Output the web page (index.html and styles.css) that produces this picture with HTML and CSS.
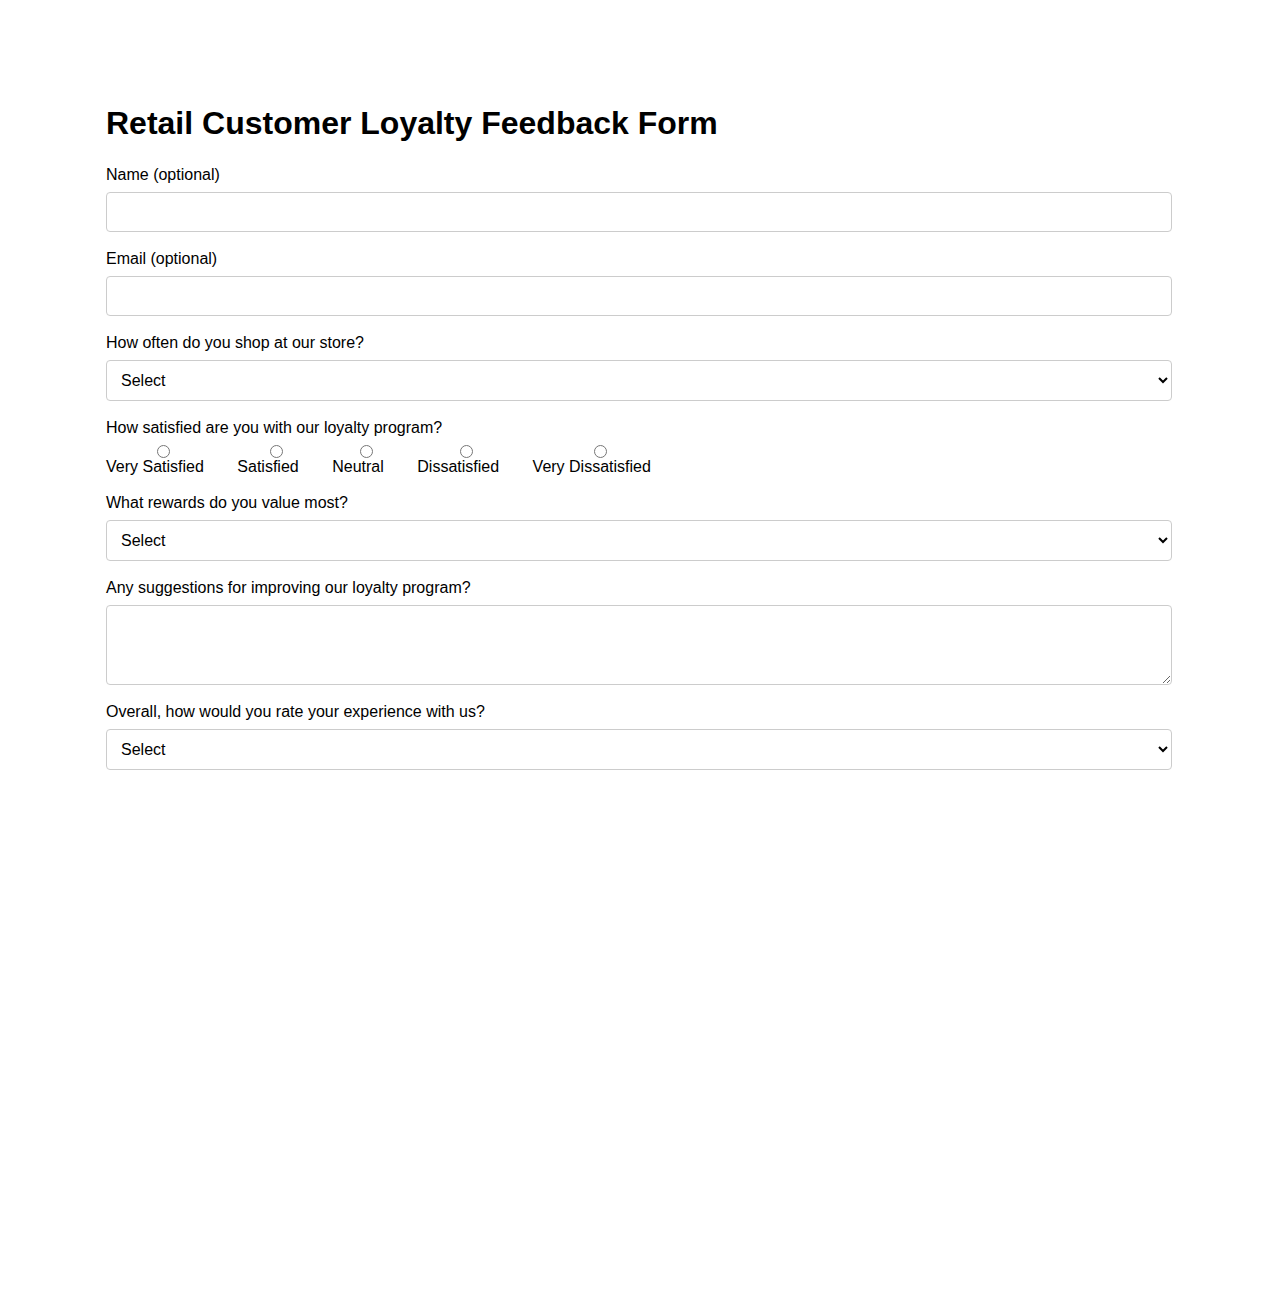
FILE: index.html
```html
<!DOCTYPE html>
<html lang="en">
<head>
<meta charset="utf-8">
<title>Retail Customer Loyalty Feedback Form</title>
<link rel="stylesheet" href="styles.css">
</head>
<body>
<div class="container">
  <h1 class="title">Retail Customer Loyalty Feedback Form</h1>
  <form class="form">
    <div class="field">
      <label class="label" for="name">Name (optional)</label>
      <input class="control" type="text" id="name">
    </div>
    <div class="field">
      <label class="label" for="email">Email (optional)</label>
      <input class="control" type="email" id="email">
    </div>
    <div class="field">
      <label class="label" for="freq">How often do you shop at our store?</label>
      <select class="control select" id="freq"><option>Select</option></select>
    </div>
    <div class="field">
      <span class="label">How satisfied are you with our loyalty program?</span>
      <div class="radios">
        <label class="radio"><input type="radio" name="sat"><span>Very Satisfied</span></label>
        <label class="radio"><input type="radio" name="sat"><span>Satisfied</span></label>
        <label class="radio"><input type="radio" name="sat"><span>Neutral</span></label>
        <label class="radio"><input type="radio" name="sat"><span>Dissatisfied</span></label>
        <label class="radio"><input type="radio" name="sat"><span>Very Dissatisfied</span></label>
      </div>
    </div>
    <div class="field">
      <label class="label" for="rewards">What rewards do you value most?</label>
      <select class="control select" id="rewards"><option>Select</option></select>
    </div>
    <div class="field">
      <label class="label" for="sugg">Any suggestions for improving our loyalty program?</label>
      <textarea class="control textarea" id="sugg"></textarea>
    </div>
    <div class="field">
      <label class="label" for="overall">Overall, how would you rate your experience with us?</label>
      <select class="control select" id="overall"><option>Select</option></select>
    </div>
  </form>
</div>
</body>
</html>
```
FILE: styles.css
```css
html, body {
  margin: 0;
  padding: 0;
  background: #fff;
}
body {
  font-family: "Liberation Sans", Arial, sans-serif;
  font-size: 16px;
  color: #000;
}
.container {
  width: 1066px;
  margin: 0 auto;
  padding-top: 105px;
}
.title {
  font-size: 32px;
  font-weight: bold;
  margin: 0 0 24px;
  line-height: 37px;
}
.form {
  display: flex;
  flex-direction: column;
  gap: 18px;
}
.field {
  display: flex;
  flex-direction: column;
}
.label {
  display: block;
  line-height: 18px;
  margin-bottom: 8px;
}
.control {
  box-sizing: border-box;
  width: 100%;
  border: 1px solid #ccc;
  border-radius: 4px;
  font-family: "Liberation Sans", Arial, sans-serif;
  font-size: 16px;
  padding: 10px;
  margin: 0;
  background: #fff;
  color: #000;
}
input.control {
  height: 40px;
}
.select {
  height: 41px;
}
.textarea {
  height: 80px;
}
.radios {
  display: flex;
  gap: 33.5px;
}
.radio {
  display: flex;
  flex-direction: column;
  align-items: center;
  line-height: 18px;
}
.radio input {
  margin: 0 0 0 17px;
  width: 13px;
  height: 13px;
}
```
